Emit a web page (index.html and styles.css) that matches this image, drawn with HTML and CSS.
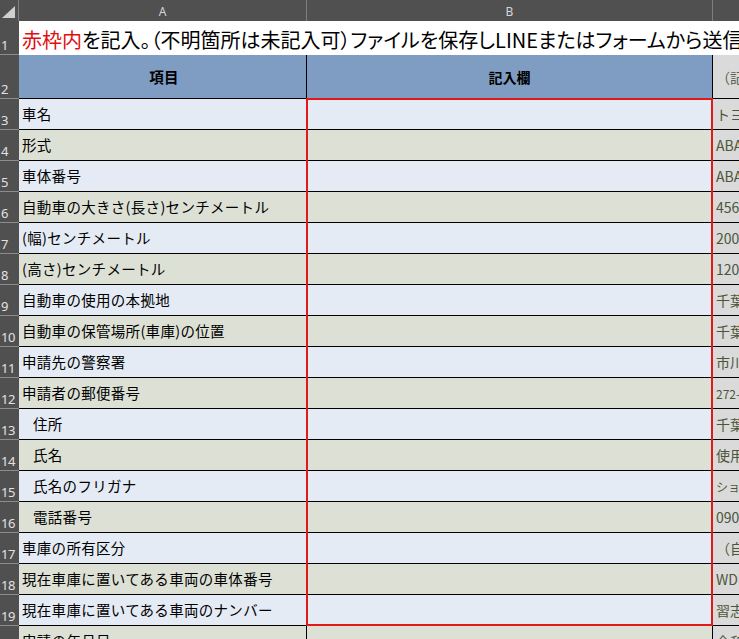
FILE: index.html
```html
<!DOCTYPE html>
<html lang="ja">
<head>
<meta charset="utf-8">
<title>記入シート</title>
<link rel="stylesheet" href="styles.css">
</head>
<body>
<div class="sheet">
  <div class="ch corner"><svg class="tri" width="13" height="12" viewBox="0 0 13 12"><polygon points="13,0 13,12 0,12" fill="#cfcfcf"/></svg></div>
  <div class="ch">A</div>
  <div class="ch">B</div>
  <div class="ch last"></div>

  <div class="rh">1</div>
  <div class="title"><span class="red">赤枠内</span>を記入。（不明箇所は未記入可）ファイルを保存しLINEまたはフォームから送信してください</div>

  <div class="rh">2</div>
  <div class="hd a">項目</div>
  <div class="hd b">記入欄</div>
  <div class="c hc">（記入例）</div>

  <div class="rh">3</div><div class="a blue">車名</div><div class="b blue"></div><div class="c">トヨタ プリウス</div>
  <div class="rh">4</div><div class="a green">形式</div><div class="b green"></div><div class="c">ABA-ZVW30</div>
  <div class="rh">5</div><div class="a blue">車体番号</div><div class="b blue"></div><div class="c">ABA-ZVW30-1234567</div>
  <div class="rh">6</div><div class="a green">自動車の大きさ(長さ)センチメートル</div><div class="b green"></div><div class="c">456</div>
  <div class="rh">7</div><div class="a blue">(幅)センチメートル</div><div class="b blue"></div><div class="c">200</div>
  <div class="rh">8</div><div class="a green">(高さ)センチメートル</div><div class="b green"></div><div class="c">120</div>
  <div class="rh">9</div><div class="a blue">自動車の使用の本拠地</div><div class="b blue"></div><div class="c">千葉県習志野市</div>
  <div class="rh">10</div><div class="a green">自動車の保管場所(車庫)の位置</div><div class="b green"></div><div class="c">千葉県習志野市</div>
  <div class="rh">11</div><div class="a blue">申請先の警察署</div><div class="b blue"></div><div class="c">市川警察署</div>
  <div class="rh">12</div><div class="a green">申請者の郵便番号</div><div class="b green"></div><div class="c small">272-0000</div>
  <div class="rh">13</div><div class="a blue ind">住所</div><div class="b blue"></div><div class="c">千葉県市川市</div>
  <div class="rh">14</div><div class="a green ind">氏名</div><div class="b green"></div><div class="c">使用 太郎</div>
  <div class="rh">15</div><div class="a blue ind">氏名のフリガナ</div><div class="b blue"></div><div class="c small">ショウ タロウ</div>
  <div class="rh">16</div><div class="a green ind">電話番号</div><div class="b green"></div><div class="c">090-0000-0000</div>
  <div class="rh">17</div><div class="a blue">車庫の所有区分</div><div class="b blue"></div><div class="c">（自己所有）</div>
  <div class="rh">18</div><div class="a green">現在車庫に置いてある車両の車体番号</div><div class="b green"></div><div class="c">WDB1234567</div>
  <div class="rh">19</div><div class="a blue">現在車庫に置いてある車両のナンバー</div><div class="b blue"></div><div class="c">習志野 300 あ 12-34</div>
  <div class="rh">20</div><div class="a green">申請の年月日</div><div class="b green"></div><div class="c">令和</div>

  <div class="redframe"></div>
</div>
</body>
</html>
```

FILE: styles.css
```css
html, body {
  margin: 0;
  padding: 0;
  background: #ffffff;
  overflow: hidden;
}

.sheet {
  position: relative;
  display: grid;
  grid-template-columns: 19px 288px 406px 40px;
  grid-template-rows: 21px 34px 44px repeat(18, 31px);
  width: 739px;
  height: 639px;
  overflow: hidden;
  font-family: "Noto Sans CJK JP", "Noto Sans", sans-serif;
  font-size: 14px;
  color: #000;
}

.sheet > div {
  box-sizing: border-box;
  min-width: 0;
}

/* column headers */
.ch {
  background: #505050;
  color: #d6d6d6;
  font-family: "Noto Sans", "DejaVu Sans", sans-serif;
  font-size: 12px;
  display: flex;
  align-items: center;
  justify-content: center;
  border-right: 1px solid #7e7e7e;
  padding-top: 2px;
}
.ch.last {
  border-right: none;
}
.corner {
  position: relative;
}
.tri {
  position: absolute;
  right: 3px;
  bottom: 3px;
}

/* row headers */
.rh {
  background: #505050;
  color: #e2e2e2;
  font-family: "Noto Sans", "DejaVu Sans", sans-serif;
  font-size: 13px;
  display: flex;
  align-items: flex-end;
  padding-left: 1px;
  line-height: 18px;
  border-bottom: 1px solid #8c8c8c;
  letter-spacing: -0.5px;
}

/* row 1 */
.title {
  grid-column: 2 / 5;
  background: #fff;
  white-space: nowrap;
  overflow: hidden;
  font-size: 20px;
  font-feature-settings: "palt";
  display: flex;
  align-items: center;
  padding-left: 3px;
  padding-top: 3px;
  line-height: 1;
}
.red {
  color: #e01010;
}

/* row 2 headers */
.hd {
  background: #7f9dc3;
  font-weight: bold;
  display: flex;
  align-items: center;
  justify-content: center;
  border-bottom: 1px solid #000;
  border-right: 1px solid #000;
  font-size: 14px;
  letter-spacing: 0;
}

.a, .b {
  border-bottom: 1px solid #000;
  border-right: 1px solid #000;
}
.a {
  display: flex;
  align-items: center;
  padding-left: 3px;
  padding-bottom: 1px;
  white-space: nowrap;
  overflow: hidden;
  font-size: 14.5px;
  letter-spacing: 0.3px;
}
.a.ind {
  padding-left: 14px;
}

.blue {
  background: #e5ebf4;
}
.green {
  background: #dde1d5;
}

.c {
  background: #dadada;
  color: #4b5639;
  border-bottom: 1px solid #000;
  display: flex;
  align-items: center;
  padding-left: 3px;
  white-space: nowrap;
  overflow: hidden;
  font-size: 14px;
}
.c.small {
  font-size: 12px;
}
.hc {
  color: #59604f;
}

/* red input frame: absolutely positioned inside its grid area, over the cells */
.redframe {
  position: absolute;
  grid-column: 3 / 4;
  grid-row: 4 / 21;
  top: -1px;
  left: -1px;
  right: 0;
  bottom: 0;
  border: 2px solid #e31818;
  pointer-events: none;
  box-sizing: border-box;
}
```
